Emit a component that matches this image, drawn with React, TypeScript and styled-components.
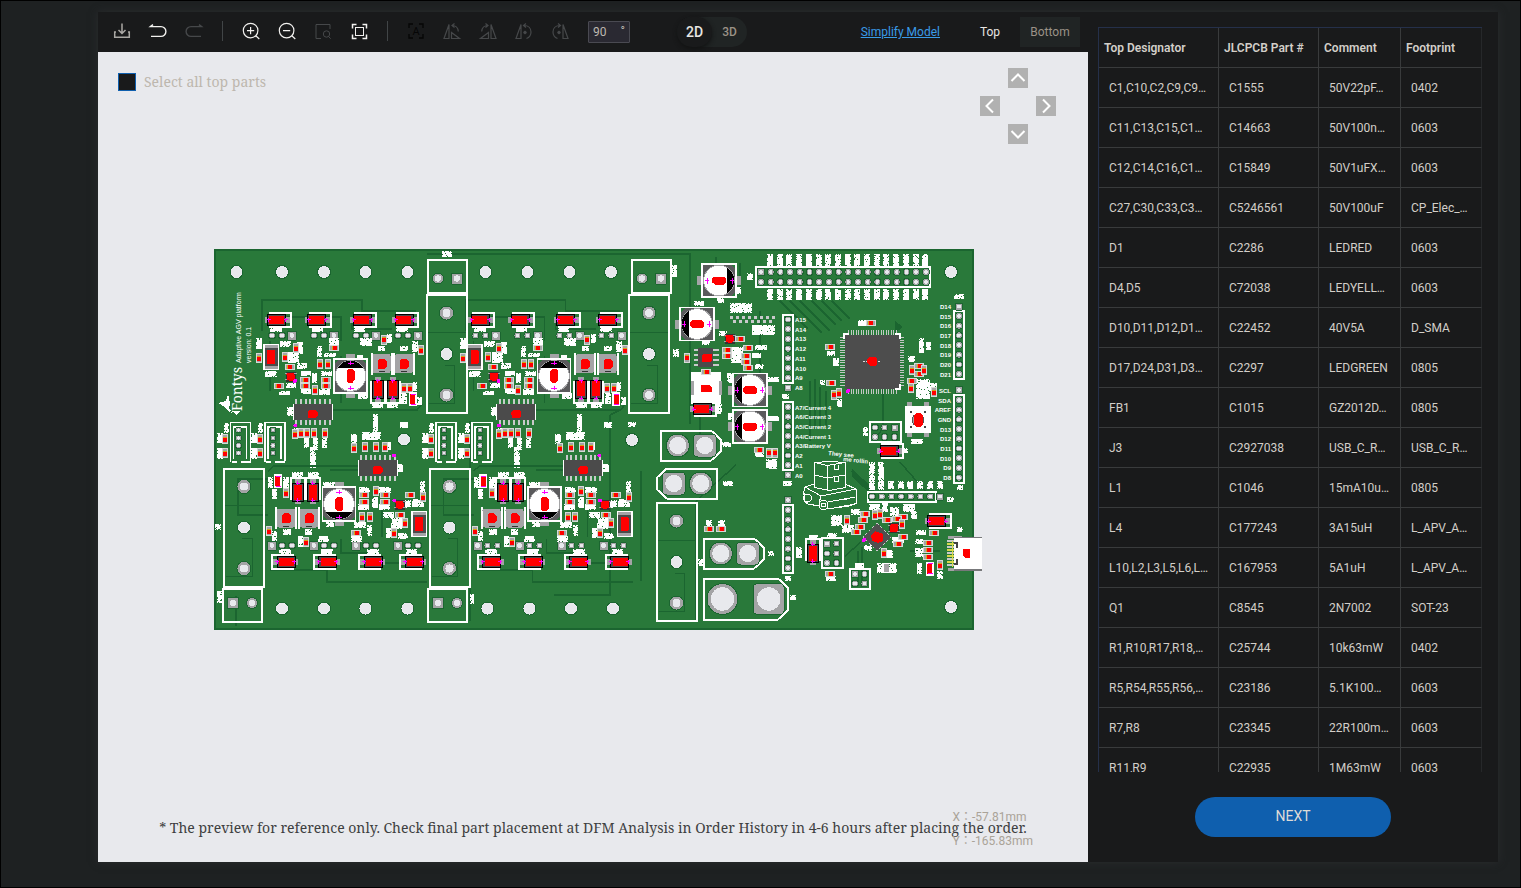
import React from "react";
import styled, { createGlobalStyle } from "styled-components";

const GlobalStyle = createGlobalStyle`
  *, *::before, *::after { box-sizing: border-box; }
  body { margin: 0; background: #1e2122; }
  button, input { font: inherit; }
`;

/* ---------- page frame ---------- */

const Page = styled.div`
  display: flex;
  height: 100vh;
  min-height: 640px;
  padding: 11px 22px 25px 97px;
  border: 1px solid #000;
  background: #1e2122;
  color: #d3cfc9;
  font-family: Roboto, "Liberation Sans", sans-serif;
  font-size: 12px;
`;

const Dialog = styled.div`
  display: flex;
  flex: 1;
  min-width: 0;
  background: #191a1b;
  box-shadow: 0 0 8px #2a2c2e;
`;

const Viewer = styled.main`
  display: flex;
  flex: 1;
  flex-direction: column;
  min-width: 0;
`;

/* ---------- toolbar ---------- */

const Toolbar = styled.div`
  display: flex;
  flex: 0 0 40px;
  align-items: center;
  gap: 16px;
  padding: 0 8px 0 14px;
`;

const IconButton = styled.button<{ $color: string }>`
  display: block;
  flex: none;
  width: 20px;
  height: 20px;
  margin-bottom: 2px;
  padding: 0;
  border: 0;
  background: none;
  color: ${(p) => p.$color};

  svg {
    display: block;
    fill: none;
    stroke: currentColor;
  }
`;

const Divider = styled.span`
  flex: none;
  width: 1px;
  height: 20px;
  margin: 0 2px 2px;
  background: #414547;
`;

const AngleField = styled.label`
  display: flex;
  flex: none;
  width: 42px;
  height: 22px;
  margin-left: 2px;
  border: 1px solid #4a4a52;
  border-radius: 1px;
  background: #2a2932;
  color: #bdb8b0;
  line-height: 18px;
`;

const AngleInput = styled.input`
  flex: 1;
  min-width: 0;
  padding: 0 0 0 4px;
  border: 0;
  background: none;
  color: inherit;
`;

const Degree = styled.span`
  padding-right: 4px;
`;

const ModeSwitch = styled.div`
  display: flex;
  flex: none;
  height: 30px;
  margin-left: 31px;
  border-radius: 15px;
  background: #202424;
`;

const ModeButton = styled.button<{ $active?: boolean }>`
  width: 35px;
  padding: 0;
  border: 0;
  border-radius: 15px;
  background: ${(p) => (p.$active ? "#191a1b" : "none")};
  box-shadow: ${(p) => (p.$active ? "0 2px 4px #121313" : "none")};
  color: ${(p) => (p.$active ? "#e8e6e3" : "#9b9287")};
  font-size: ${(p) => (p.$active ? 14 : 12)}px;
  font-weight: 500;
`;

const SideGroup = styled.div`
  display: flex;
  align-items: center;
  gap: 20px;
  margin-left: auto;
`;

const ModelLink = styled.a`
  color: #3a9be8;
  white-space: nowrap;
`;

const SideTabs = styled.div`
  display: flex;
`;

const SideTab = styled.button<{ $active?: boolean }>`
  width: 60px;
  height: 30px;
  padding: 0;
  border: 0;
  background: ${(p) => (p.$active ? "#191a1b" : "#202424")};
  color: ${(p) => (p.$active ? "#e8e6e3" : "#9b9287")};
`;

/* ---------- canvas ---------- */

const Canvas = styled.section`
  position: relative;
  display: flex;
  flex: 1;
  flex-direction: column;
  min-height: 0;
  background: #e8e9ed;
`;

const CanvasHead = styled.div`
  display: flex;
  justify-content: space-between;
  padding: 16px 32px 0 20px;
`;

const SelectAll = styled.label`
  display: flex;
  align-items: center;
  gap: 8px;
  height: 28px;
  color: #bdb7ae;
  font: 14px/28px "Noto Serif", "Liberation Serif", serif;
`;

const Tick = styled.input`
  appearance: none;
  width: 18px;
  height: 18px;
  margin: 0;
  border: 1px solid #0f5fae;
  background: #191a1b;
`;

const PanPad = styled.div`
  display: grid;
  grid-template-areas: ". up ." "left . right" ". down .";
  grid-template-columns: repeat(3, 20px);
  grid-template-rows: repeat(3, 20px);
  gap: 8px;
`;

const PanButton = styled.button<{ $area: string }>`
  grid-area: ${(p) => p.$area};
  padding: 0;
  border: 0;
  background: #b1b1b1;

  svg {
    display: block;
    fill: none;
    stroke: #fff;
    stroke-width: 2;
  }
`;

const BoardArea = styled.div`
  display: flex;
  flex: 1;
  align-items: center;
  justify-content: center;
  min-height: 0;
  padding-left: 2px;
`;

const BoardSvg = styled.svg`
  display: block;
  width: 760px;
  max-width: 100%;
  overflow: visible;
`;

const Note = styled.p`
  margin: 0;
  padding: 84px 16px 24px;
  color: #3e3f41;
  font: 14px/20px "Noto Serif", "Liberation Serif", serif;
  text-align: center;
`;

const Position = styled.div`
  position: absolute;
  right: 55px;
  bottom: 9px;
  color: #aaa398;
  font-family: Roboto, "Noto Sans CJK JP", sans-serif;
  line-height: 24px;
`;

/* ---------- parts list ---------- */

const Side = styled.aside`
  display: flex;
  flex: 0 0 410px;
  flex-direction: column;
  align-items: center;
  padding: 15px 0 25px;
`;

const TableFrame = styled.div`
  flex: 1;
  align-self: stretch;
  min-height: 0;
  margin: 0 16px 0 10px;
  overflow: hidden;
`;

const PartsTable = styled.table`
  width: 100%;
  table-layout: fixed;
  border: 0 solid #25304a;
  border-width: 1px 0 0 1px;
  border-spacing: 0;
`;

const Cell = styled.td`
  height: 40px;
  padding: 0 0 0 10px;
  overflow: hidden;
  border: 0 solid #393b3c;
  border-width: 0 1px 1px 0;
  white-space: nowrap;

  &:last-child { border-right-color: #26282a; }
`;

const HeadCell = styled(Cell)`
  padding-left: 5px;
  font-weight: 600;
  text-align: left;
`;

const Col = styled.col<{ $width: number }>`
  width: ${(p) => p.$width}px;
`;

const NextButton = styled.button`
  flex: none;
  width: 196px;
  height: 40px;
  margin-top: 25px;
  padding: 0 0 2px;
  border: 0;
  border-radius: 20px;
  background: #0f5fae;
  color: #dedbd7;
  font-size: 14px;
`;

/* ---------- toolbar icons ---------- */

const Glyph = ({ children, flip }: { children: React.ReactNode; flip?: boolean }) => (
  <svg width="20" height="20" viewBox="0 0 20 20" aria-hidden="true">
    {flip ? <g transform="translate(20 0) scale(-1 1)">{children}</g> : children}
  </svg>
);

const ReturnArrow = () => <path d="M5 3.6L2.4 5.6H13a4.9 4.9 0 0 1 0 9.8H3" strokeWidth="1.4" />;
const Lens = () => (
  <>
    <circle cx="9.6" cy="9.6" r="7.3" strokeWidth="1.2" />
    <path d="M14.8 14.8L18.3 18M6 9.6h7.2" strokeWidth="1.2" />
  </>
);
const FlipShape = () => (
  <path d="M2 17.5L7 3.5v14zM9.5 11.5v6h8zM10 4.5c4 0 6 2 6.3 6M12.5 2.5L10 4.5l2.5 2" strokeWidth="1.2" />
);
const TurnShape = () => (
  <>
    <path d="M2 17.5L7 3.5v14zM10 4.5c4.5 0 7 3 7 6.5s-2 5.5-4.5 6.5M12 2.5L9.5 4.5l2.5 2" strokeWidth="1.2" />
    <circle cx="11" cy="11.5" r="1.3" fill="currentColor" />
  </>
);

const CORNERS = "M3 7V3h4M13 3h4v4M17 13v4h-4M7 17H3v-4";

/* ---------- circuit board drawing ---------- */

type Pt = [number, number];
type Rect4 = [number, number, number, number];

const GREEN = "#29793a";
const TRACE = "#1b6530";
const PAD = "#a4a4a6";
const HOLE = "#e8e9ed";

/* Dense silkscreen lettering, drawn as runs of one-unit dots. */
const inkPath = (areas: Rect4[]) => {
  let seed = 7;
  const rnd = () => {
    seed = (seed * 1103515245 + 12345) % 2147483648;
    return seed / 2147483648;
  };
  let d = "";
  areas.forEach(([x, y, w, h]) => {
    for (let j = 0; j < h; j++) {
      let start = -1;
      for (let i = 0; i <= w; i++) {
        const edge = i === 0 || j === 0 || i === w - 1 || j === h - 1;
        const on = i < w && rnd() < (edge ? 0.78 : 0.95);
        if (on && start < 0) start = i;
        if (!on && start >= 0) {
          d += `M${x + start} ${y + j}h${i - start}v1h${start - i}z`;
          start = -1;
        }
      }
    }
  });
  return d;
};

const Ink = ({ areas }: { areas: Rect4[] }) => <path d={inkPath(areas)} fill="#fff" />;

const Outline = ({ r, d }: { r?: Rect4; d?: string }) =>
  r ? (
    <rect x={r[0]} y={r[1]} width={r[2]} height={r[3]} fill="none" stroke="#fff" strokeWidth="2" />
  ) : (
    <path d={d} fill="none" stroke="#fff" strokeWidth="2" />
  );

const Drill = ({ x, y, r = 6.5 }: { x: number; y: number; r?: number }) => (
  <circle cx={x} cy={y} r={r} fill={HOLE} stroke={TRACE} />
);

const Pin = ({ x, y, s = 3, sq, big }: { x: number; y: number; s?: number; sq?: boolean; big?: boolean }) => (
  <>
    <rect
      x={x - s - 1} y={y - s - 1} width={s * 2 + 2} height={s * 2 + 2}
      rx={sq ? (big ? 5 : 1) : s + 1} fill={TRACE}
    />
    <rect x={x - s} y={y - s} width={s * 2} height={s * 2} rx={sq ? (big ? 4 : 0) : s} fill={PAD} />
    <circle cx={x} cy={y} r={s * (big ? 0.78 : 0.62)} fill={HOLE} />
  </>
);

const Chip = ({ at: [x, y], v }: { at: Pt; v?: boolean }) => (
  <g transform={`translate(${x} ${y})${v ? " rotate(90)" : ""}`}>
    <rect x="-5" y="-3" width="10" height="6" fill="#d6dad6" />
    <rect x="-4" y="-2" width="8" height="4" fill={PAD} />
    <rect x="-2.5" y="-2" width="5" height="4" fill="#d9a514" />
    <rect x="-1.5" y="-2" width="4" height="4" fill="#f00" />
  </g>
);

const Chips = ({ h = [], v = [] }: { h?: Pt[]; v?: Pt[] }) => (
  <>
    {h.map((p, i) => <Chip key={i} at={p} />)}
    {v.map((p, i) => <Chip key={`v${i}`} at={p} v />)}
  </>
);

const Cross = ({ x, y }: { x: number; y: number }) => (
  <path d={`M${x - 3} ${y}h6M${x} ${y - 2}v4`} stroke="#f0f" />
);

const Diode = ({ x, y, turn = 0 }: { x: number; y: number; turn?: number }) => (
  <g transform={`translate(${x} ${y}) rotate(${turn})`}>
    <path d="M-8 -7H14V7H-8" fill="none" stroke="#fff" strokeWidth="2" />
    <rect x="-12" y="-3" width="25" height="6" fill={PAD} />
    <rect x="-9" y="-5.5" width="18" height="11" fill="#4b4b4b" stroke="#000" />
    <rect x="-8" y="-4" width="15" height="8" fill="#f00" />
    <path d="M-10 0h4M7 0h4M-8.5 -2v4M9 -2v4" stroke="#f0f" />
  </g>
);

const Can = ({ x, y, turn = 0 }: { x: number; y: number; turn?: number }) => (
  <g transform={`translate(${x} ${y}) rotate(${turn})`}>
    <rect x="-4.5" y="-22" width="9" height="44" fill={PAD} />
    <path d="M-16 -12L-11 -17H11L16 -12V16H-16z" fill="#5a5a5c" />
    <rect x="-16.5" y="-17" width="33" height="34" fill="none" stroke="#fff" strokeWidth="1.5" />
    <circle r="15.3" fill="#fff" stroke={PAD} />
    <path d="M-13 -8A15.3 15.3 0 0 1 13 -8z" fill="#000" />
    <path d="M-4 -5l2 -2h4l2 2v9l-2 3h-4l-2 -2z" fill="#f00" />
    <Cross x={0} y={-13} />
    <Cross x={0} y={12} />
  </g>
);

const Coil = ({ x, y }: { x: number; y: number }) => (
  <>
    <path d={`M${x - 10} ${y - 11}v22M${x + 10} ${y - 11}v22`} stroke="#fff" strokeWidth="2" />
    <rect x={x - 9} y={y - 9.5} width="18" height="19" rx="2" fill={PAD} />
    <path d={`M${x - 4} ${y - 3}l2 -2h4l3 3v5l-2 2h-7z`} fill="#f00" />
    <path d={`M${x - 3} ${y + 8}h6`} stroke="#333" />
  </>
);

const Soic = ({ x, y }: { x: number; y: number }) => (
  <>
    {Array.from({ length: 8 }, (_, i) => (
      <rect key={i} x={x - 17.5 + i * 4.8} y={y - 13} width="2" height="26" fill="#c9c9cb" />
    ))}
    <rect x={x - 20} y={y - 8} width="40" height="16" fill="#fff" />
    <rect x={x - 19} y={y - 8} width="38" height="16" fill="#4b4b4b" />
    <path d={`M${x - 5} ${y}l2 -2h6l2 2v4l-2 2h-7z`} fill="#f00" />
  </>
);

const Slab = ({ x, y }: { x: number; y: number }) => (
  <>
    <rect x={x - 8} y={y - 13} width="16" height="26" fill="#fff" />
    <rect x={x - 6.5} y={y - 12} width="13" height="24" fill={PAD} />
    <rect x={x - 6.5} y={y - 9} width="13" height="18" fill="#4b4b4b" />
    <rect x={x - 4} y={y - 7} width="8" height="14" rx="1" fill="#f00" />
  </>
);

const Dot3 = ({ x, y }: { x: number; y: number }) => (
  <>
    <rect x={x - 5} y={y - 5} width="10" height="10" fill="#333" />
    <path d={`M${x - 6} ${y - 3}h12M${x - 6} ${y + 3}h12`} stroke={PAD} />
    <rect x={x - 4} y={y - 4} width="8" height="8" rx="2" fill="#f00" />
  </>
);

const Led = ({ x, y }: { x: number; y: number }) => (
  <>
    <rect x={x - 4} y={y - 7} width="8" height="14" fill="#fff" />
    <rect x={x - 2.5} y={y - 5} width="5" height="10" fill="#f00" />
    <path d={`M${x - 2} ${y - 5}h5M${x - 2} ${y + 5}h5`} stroke="#f0f" />
  </>
);

const Magenta = ({ x, y }: { x: number; y: number }) => <circle cx={x} cy={y} r="2" fill="#f0f" />;

const UpperDriver = () => (
  <g>
    <path
      d="M262 330V299h100v11h54M287 316h54v24M352 316v12h40M341 402V355M331 409h86l5 -6M270 340v50"
      fill="none" stroke={TRACE} strokeWidth="1.5"
    />
    {[276.5, 316.5, 362, 404].map((x) => <Diode key={x} x={x} y={318.5} />)}
    {[272, 314, 356, 398].map((x) => (
      <g key={x}>
        <Pin x={x} y={334.5} /><Pin x={x + 10} y={334.5} /><Pin x={x + 20} y={334.5} s={4} sq />
      </g>
    ))}
    <Ink
      areas={[
        [256, 337, 6, 11], [280, 340, 11, 6], [297, 341, 6, 12], [288, 351, 11, 11], [297, 362, 10, 6],
        [265, 370, 12, 6], [286, 382, 10, 5], [279, 390, 11, 4], [301, 370, 10, 5], [301, 388, 10, 5],
        [312, 372, 5, 10], [321, 370, 11, 5], [319, 388, 11, 6], [317, 345, 5, 11], [324, 352, 12, 4],
        [329, 337, 10, 8], [360, 337, 12, 8], [387, 333, 5, 9], [378, 345, 7, 5], [400, 345, 8, 5],
        [412, 340, 6, 11], [358, 392, 10, 6], [372, 401, 11, 6], [387, 401, 11, 6], [401, 392, 6, 11],
        [412, 381, 5, 9], [417, 396, 5, 8], [357, 354, 6, 6], [270, 326, 12, 5], [312, 326, 11, 5],
        [354, 326, 11, 5], [396, 326, 12, 5], [287, 406, 6, 9], [294, 427, 6, 8], [304, 437, 5, 10],
        [313, 437, 5, 12], [322, 435, 5, 12], [310, 445, 6, 22], [351, 433, 6, 10], [373, 413, 5, 18],
        [362, 431, 19, 8], [400, 421, 8, 6], [384, 441, 7, 8],
      ]}
    />
    <Slab x={271} y={356} />
    <Dot3 x={290.5} y={375.5} />
    <Magenta x={295} y={380} />
    <Chips
      h={[[289.5, 365.5], [278.5, 385], [305, 378.5], [305, 385], [325.5, 378.5], [325.5, 385], [334, 347]]}
      v={[
        [259, 357], [295.5, 347], [284.5, 356], [314.5, 389], [320, 363], [327.5, 363], [383.5, 338.5],
        [421, 349], [403.5, 387], [410, 387], [301, 432], [307, 432], [314, 432], [325, 432], [295, 433],
      ]}
    />
    <Can x={350.5} y={375} />
    <Coil x={381.5} y={362.5} />
    <Coil x={404} y={362.5} />
    <Diode x={377.5} y={388} turn={90} />
    <Diode x={392.5} y={388} turn={90} />
    <Led x={412.5} y={398} />
    <Soic x={312.5} y={411} />
    <Magenta x={295.5} y={424.5} />
  </g>
);

const LowerDriver = () => (
  <g>
    <path
      d="M268 478h-30v36h30M268 470l6 -5h84M270 569h57v12h100M376 545v17h50M341 538v14h30M382 500v36M330 469H390"
      fill="none" stroke={TRACE} strokeWidth="1.5"
    />
    {[286, 327.5, 373, 414].map((x) => <Diode key={x} x={x} y={560.5} turn={180} />)}
    {[272, 314, 356, 398].map((x) => (
      <g key={x}>
        <Pin x={x} y={544.5} s={4} sq /><Pin x={x + 10} y={544.5} /><Pin x={x + 20} y={544.5} />
      </g>
    ))}
    <Ink
      areas={[
        [268, 476, 5, 11], [272, 488, 5, 10], [283, 476, 6, 11], [292, 471, 11, 6], [308, 471, 11, 6],
        [323, 481, 12, 6], [359, 486, 11, 6], [358, 503, 11, 6], [372, 496, 6, 11], [379, 486, 12, 6],
        [379, 503, 11, 6], [403, 499, 8, 8], [412, 498, 12, 8], [420, 480, 5, 12], [383, 511, 11, 6],
        [391, 517, 11, 11], [354, 521, 12, 6], [367, 524, 5, 11], [386, 527, 6, 10], [398, 532, 10, 6],
        [318, 535, 11, 6], [351, 535, 11, 6], [272, 530, 5, 10], [283, 528, 8, 6], [305, 528, 7, 6],
        [298, 535, 5, 11], [279, 548, 12, 5], [321, 548, 12, 5], [367, 548, 12, 5], [406, 548, 11, 5],
        [326, 521, 8, 5], [397, 463, 6, 8],
      ]}
    />
    <Led x={277.5} y={480} />
    <Can x={339} y={503} turn={180} />
    <Coil x={286} y={517} />
    <Coil x={309} y={517} />
    <Diode x={297.5} y={491} turn={270} />
    <Diode x={312.5} y={491} turn={270} />
    <Chips
      h={[[364, 494], [364, 500.5], [385, 494], [385, 500.5], [356, 532], [410, 494], [400, 514]]}
      v={[
        [286, 492], [375.5, 490], [362, 516], [369.5, 516], [306, 541], [269, 530], [405, 522], [394, 532],
        [423, 496], [354, 447], [365, 446], [376, 446], [385, 446],
      ]}
    />
    <Dot3 x={399.5} y={503.5} />
    <Magenta x={394.5} y={499.5} />
    <Slab x={419} y={523} />
    <Soic x={377.5} y={467} />
    <Magenta x={394} y={454.5} />
  </g>
);

const TallPort = ({ x, y }: { x: number; y: number }) => (
  <>
    <path d={`M${x} ${y + 37}h39M${x + 18} ${y + 70}h10v38h-26`} fill="none" stroke={TRACE} />
    <Outline r={[x, y, 40, 118]} />
    <Pin x={x + 20} y={y + 18} s={6.5} />
    <Drill x={x + 20} y={y + 59} />
    <Pin x={x + 20} y={y + 100} s={6.5} />
  </>
);

const TwinPort = ({ x, y, first }: { x: number; y: number; first?: boolean }) => (
  <>
    <Outline r={[x, y, 39, 33]} />
    <Pin x={x + 10} y={first ? y + 14 : y + 19} s={5} sq={first} />
    <Pin x={x + 29} y={first ? y + 14 : y + 19} s={5} sq={!first} />
  </>
);

const SmallPlug = ({ x }: { x: number }) => (
  <>
    <path
      d={`M${x - 8} 461V421.500h20v38.500M${x - 7} 461h5M${x + 2} 461h10M${x - 5} 458v-32h13v32`}
      fill="none" stroke="#fff" strokeWidth="1.5"
    />
    {[429, 437, 444.5, 452].map((y) => <Pin key={y} x={x} y={y} s={2.5} />)}
    <Ink areas={[[x - 22, 432, 6, 10], [x - 22, 447, 6, 11], [x - 15, 422, 5, 10]]} />
    <Chips v={[[x - 13.5, 438], [x - 13.5, 452]]} />
  </>
);

const PowerPort = ({ x, y, w, h, s, left }: { x: number; y: number; w: number; h: number; s: number; left?: boolean }) => {
  const body = left
    ? `M${x + 10} ${y}H${x + w}V${y + h}H${x + 10}L${x} ${y + h - 9}V${y + 9}z`
    : `M${x} ${y}H${x + w - 10}L${x + w} ${y + 9}V${y + h - 9}L${x + w - 10} ${y + h}H${x}z`;
  const a = left ? x + w * 0.28 : x + w * (s > 12 ? 0.22 : 0.28);
  const b = left ? x + w * 0.73 : x + w * (s > 12 ? 0.77 : 0.73);
  return (
    <>
      <Outline d={body} />
      <Pin x={a} y={y + h / 2} s={s} big sq={left} />
      <Pin x={b} y={y + h / 2} s={s} big sq={!left} />
    </>
  );
};

const STEP = 9.7;
const pins = (n: number, from: number) => Array.from({ length: n }, (_, i) => from + i * STEP);

const PinColumn = ({ x, from, n, key1, labels, side }: {
  x: number; from: number; n: number; key1: number; labels?: string[]; side?: "left" | "right";
}) => {
  const all = [...pins(n, from), key1].sort((a, b) => a - b);
  return (
    <>
      <Outline r={[x - 5, from - 5, 10, (n - 1) * STEP + 10]} />
      {pins(n, from).map((y) => <Pin key={y} x={x} y={y} s={3} />)}
      <Pin x={x} y={key1} s={3} sq />
      {labels?.map((t, i) => (
        <text
          key={t} x={side === "left" ? x - 8 : x + 7} y={all[i] + 2.5}
          textAnchor={side === "left" ? "end" : "start"}
        >
          {t}
        </text>
      ))}
    </>
  );
};

const Mcu = () => (
  <>
    <path d="M848 331.500h49M848 390h49" stroke="#c3c6c4" strokeWidth="5" strokeDasharray="1.3 1.2" />
    <path d="M842.500 336v49M901 336v49" stroke="#c3c6c4" strokeWidth="5" strokeDasharray="1.3 1.2" />
    <rect x="844.5" y="333.5" width="55" height="54" fill="#4d4d4d" />
    <path d="M844 338v-5h5M895 333h5v5M900 383v5h-5" fill="none" stroke="#fff" strokeWidth="1.5" />
    <path d="M863 360.500h17" stroke="#ddd" strokeDasharray="2 1" />
    <path d="M867 358l2 -2h6l2 2v5l-2 2h-5l-3 -3z" fill="#f00" />
    <Magenta x={848} y={390} />
  </>
);

const Cart = () => (
  <>
    <path
      d="M814.500 461.500l15 -1 16 1v25l-16 3 -15 -3zM814.500 461.500l13 3v25M827.500 464.500l18 -3M814.500 474l13 3 18 -3M834.500 464v4h4v-4M834.500 476v4h4v-4"
      fill="none" stroke="#fff"
    />
    <path
      d="M814 483l-9 3 -2 8M845 483l11 5 1 14 -8 3 -22 3M805 486l16 9 35 -7M821 495l-2 7M828 501l27 -5M829 508l26 -5M839 499l8 -1M804 492v8l4 3 11 2"
      fill="none" stroke="#fff"
    />
    <circle cx="807.5" cy="497" r="4" fill="none" stroke="#fff" />
    <circle cx="823.5" cy="504" r="4.5" fill={GREEN} stroke="#fff" />
    <circle cx="823.5" cy="504" r="2" fill="none" stroke="#fff" />
  </>
);

const Receptacle = () => (
  <>
    {Array.from({ length: 9 }, (_, i) => (
      <path key={i} d={`M947 ${540 + i * 3}h7`} stroke={i % 2 ? "#d6d84a" : "#c9c9cb"} strokeWidth="1.5" />
    ))}
    <rect x="948" y="535" width="14" height="3" fill={PAD} />
    <rect x="948" y="567" width="14" height="3" fill={PAD} />
    <rect x="954" y="536" width="28" height="33" fill="#fff" />
    <path d="M954 536.500h28M954 569h28" stroke="#77787a" strokeWidth="1.5" />
    <path d="M952.500 540v26" stroke="#d6d84a" strokeWidth="1.5" />
    <path d="M954 542h3v5M954 563h3v-5" fill="none" stroke="#444" strokeWidth="1.5" />
    <path d="M963 548h7v9h-5l-2 -3z" fill="#f00" />
  </>
);

const HOLES: Pt[] = [
  [236.5, 271], [282, 271], [324, 271], [365.5, 271], [407.5, 271], [485.5, 271], [527.5, 271],
  [569.5, 271], [611, 271], [951, 271], [282, 607.5], [324, 607.5], [365.5, 607.5], [407.5, 607.5],
  [487.5, 607.5], [529.5, 607.5], [571, 607.5], [613, 607.5], [951, 606], [404, 438.5], [632, 439],
];

const COLUMN_INK: Rect4[] = pins(17, 770).flatMap((x): Rect4[] => [
  [Math.round(x) - 3, 253, 6, 12], [Math.round(x) - 3, 288, 6, 11],
]);

const Board = () => (
  <BoardSvg viewBox="214 248 760 381" shapeRendering="crispEdges" role="img" aria-label="Top side of the circuit board">
    <rect x="215" y="249" width="758" height="379" fill={GREEN} stroke={TRACE} strokeWidth="2" />
    <g fill="none" stroke={TRACE} strokeWidth="1.5">
      <path d="M427 253h263v170M470 420v200M610 414v180h-56M641 470v110M236 595v30M696 500v120M610 414l12 -6" />
      <path d="M780 300l28 28M790 300l32 32M800 300l30 30M812 300l24 24M822 300l20 20M832 300l18 18" />
      <path d="M883 387v40l-10 14M810 380v60M815 378v50M820 386v40M826 390v36M900 461l26 30M852 470l20 20M910 550h30M696 500l40 -36" />
      <path d="M858 580v-30M862 580v-34M845 555l16 -14M716 256v40M740 262v30M760 310v90M700 410v40" />
    </g>
    <path d="M895 320l8 6 -8 6zM852 468l22 20v8l-22 -20z" fill={TRACE} />

    {HOLES.map(([x, y]) => <Drill key={`${x}-${y}`} x={x} y={y} />)}

    <UpperDriver />
    <g transform="translate(203.5 0)"><UpperDriver /></g>
    <LowerDriver />
    <g transform="translate(205.5 0)"><LowerDriver /></g>

    <TallPort x={426.5} y={294} />
    <TallPort x={629} y={294} />
    <TallPort x={224} y={467.5} />
    <TallPort x={429.5} y={467.5} />
    <TallPort x={656.5} y={502} />
    <TwinPort x={428} y={258.5} />
    <TwinPort x={632} y={258.5} />
    <TwinPort x={223} y={588} first />
    <TwinPort x={428} y={588} first />
    {[238.5, 273, 444, 480].map((x) => <SmallPlug key={x} x={x} />)}

    <PowerPort x={661} y={429.5} w={60} h={30} s={11} />
    <PowerPort x={657} y={467.5} w={60} h={30} s={11} left />
    <PowerPort x={704} y={537.5} w={60} h={30} s={11} />
    <PowerPort x={704} y={577.5} w={84} h={41} s={15} />

    <Ink
      areas={[
        ...COLUMN_INK,
        [442, 250, 10, 6], [672, 264, 5, 12], [694, 300, 10, 5], [717, 297, 7, 5], [747, 272, 6, 7], [737, 286, 4, 7],
        [730, 302, 22, 10], [752, 324, 23, 10], [719, 330, 8, 5], [673, 348, 6, 8], [731, 346, 12, 16],
        [755, 344, 12, 5], [752, 352, 9, 5], [755, 363, 9, 5], [716, 403, 6, 10], [727, 372, 7, 10],
        [768, 376, 11, 5], [768, 415, 11, 5], [728, 412, 5, 7], [702, 340, 8, 4], [766, 458, 11, 10],
        [755, 452, 9, 4], [858, 319, 8, 6], [827, 350, 8, 5], [833, 357, 6, 8], [820, 379, 5, 5],
        [837, 398, 5, 8], [919, 337, 5, 15], [926, 341, 5, 8], [908, 355, 7, 6], [916, 378, 14, 20],
        [929, 382, 8, 8], [911, 438, 12, 5], [863, 426, 5, 9], [903, 447, 5, 6], [869, 461, 6, 28],
        [878, 461, 6, 28], [888, 480, 6, 8], [898, 480, 6, 8], [907, 480, 6, 8], [917, 480, 6, 8],
        [927, 480, 6, 8], [937, 480, 6, 8], [722, 441, 9, 5], [723, 480, 10, 5], [698, 558, 5, 7],
        [768, 550, 6, 5], [790, 594, 6, 5], [706, 519, 6, 6], [718, 519, 7, 6], [831, 514, 11, 11],
        [851, 508, 9, 6], [842, 524, 12, 8], [869, 503, 11, 6], [882, 501, 6, 10], [890, 506, 9, 9],
        [903, 503, 12, 8], [911, 510, 6, 8], [892, 536, 12, 6], [886, 549, 7, 8], [864, 544, 8, 6],
        [877, 562, 20, 10], [934, 512, 8, 3], [916, 529, 10, 5], [915, 538, 8, 5], [915, 547, 8, 9],
        [917, 562, 5, 11], [937, 570, 6, 8], [957, 526, 6, 5], [809, 534, 9, 5], [827, 532, 10, 5],
        [796, 546, 6, 11], [826, 575, 10, 5], [855, 562, 9, 5], [783, 480, 9, 5], [785, 575, 6, 5],
        [957, 484, 6, 5], [947, 496, 7, 5], [954, 293, 10, 5], [215, 523, 6, 6],
        [217, 590, 5, 12], [470, 593, 4, 10], [628, 421, 8, 5], [782, 393, 7, 5], [400, 421, 8, 5],
      ]}
    />

    <Can x={719} y={279.5} turn={90} />
    <Can x={697} y={323} turn={270} />
    <Can x={750} y={389} turn={270} />
    <Can x={750} y={425.5} turn={270} />

    <path d="M730 316h45M733 320h42" stroke="#c9c9cb" strokeWidth="3" strokeDasharray="3 3" />
    <Dot3 x={729.5} y={337.5} />
    <path d="M694 349h25M694 354h25M694 359h25M694 364h25" stroke="#c9c9cb" strokeWidth="2" />
    <rect x="698" y="347" width="15" height="19" fill="#4b4b4b" />
    <rect x="702" y="353" width="10" height="8" rx="2" fill="#f00" />
    <rect x="691" y="371" width="30" height="32" fill="#fff" />
    <path d="M692 380v14M720.500 380v14" stroke={PAD} strokeWidth="3" />
    <path d="M701 384h8l3 3v4h-11z" fill="#f00" />
    <Diode x={702} y={408} />
    <Chips
      h={[
        [706, 370.5], [727, 349], [727, 355], [746, 355], [746, 361], [748, 366.5], [748, 347], [740, 338],
        [759, 449], [870.5, 322], [830, 345.5], [831, 382], [911.5, 380], [919, 365], [919, 373], [709, 528],
        [721, 528], [865, 512.5], [863, 519], [860, 525.5], [856, 531], [887, 519], [903, 516], [897, 518],
        [903, 535.5], [898, 543], [928, 541.5], [928, 549], [928, 555.5], [934, 532], [830, 573],
      ]}
      v={[
        [687, 356.5], [768.5, 451.5], [774.5, 451.5], [839, 392], [833.5, 393.5], [924, 369],
        [911.5, 369], [910.5, 387], [934, 391], [847, 519], [875, 514], [880, 513], [940, 564], [902, 523],
        [884, 552],
      ]}
    />

    <Outline r={[756, 266, 174, 20]} />
    {pins(18, 761).map((x, i) => (
      <g key={x}><Pin x={x} y={271} s={3} sq={i === 0} /><Pin x={x} y={281} s={3} /></g>
    ))}
    <g fill="#fff" fontFamily='"Liberation Sans", sans-serif' fontSize="6" fontWeight="700">
      <PinColumn x={788} from={318.5} n={7} key1={386.5} side="right"
        labels={["A15", "A14", "A13", "A12", "A11", "A10", "A9", "A8"]} />
      <PinColumn x={788} from={406} n={7} key1={474} side="right"
        labels={["A7/Current 4", "A6/Current 3", "A5/Current 2", "A4/Current 1", "A3/Battery V", "A2", "A1", "A0"]} />
      <PinColumn x={788} from={509} n={7} key1={499} />
      <PinColumn x={959} from={315} n={7} key1={305.5} side="left"
        labels={["D14", "D15", "D16", "D17", "D18", "D19", "D20", "D21"]} />
      <PinColumn x={959} from={399} n={9} key1={389} side="left"
        labels={["SCL", "SDA", "AREF", "GND", "D13", "D12", "D11", "D10", "D9", "D8"]} />
      <text x="828" y="454" transform="rotate(6 828 454)">They see</text>
      <text x="843" y="460" transform="rotate(6 843 460)">me rollin</text>
      <text transform="translate(241 362) rotate(-90)" fontSize="7" fontWeight="400">Adaptive AGV platform</text>
      <text transform="translate(251 362) rotate(-90)" fontSize="7" fontWeight="400">version: 0.1</text>
      <text transform="translate(242 410) rotate(-90)" fontSize="14" fontWeight="400" fontFamily='"Noto Serif", serif'>Fontys</text>
    </g>
    <path d="M218 402l8 -2 2 -7 2 9 -1 6 8 6 -9 -4 -3 -4zM229 410l8 4 3 -4" fill="#fff" />

    <Outline r={[867.5, 490.5, 68, 10]} />
    {pins(7, 872).map((x) => <Pin key={x} x={x} y={495.5} s={3} />)}
    <Pin x={940} y={495.5} s={3} sq />

    <Mcu />
    <rect x="905" y="405" width="26" height="27" fill="#fff" />
    {[[909, 403], [926, 403], [909, 434], [926, 434]].map(([x, y]) => (
      <rect key={`${x}${y}`} x={x - 2.5} y={y - 2} width="5" height="4" fill={PAD} />
    ))}
    <circle cx="918" cy="419" r="6" fill={PAD} stroke="#555" />
    <path d="M914 415l2 -3h4l3 3v8l-3 3h-4l-2 -3z" fill="#f00" />
    <path d="M910 411h2M924 411h2M910 426h2M924 426h2" stroke="#444" strokeWidth="2" />

    <Outline r={[869.5, 421, 31, 20]} />
    {[875, 884.5, 894.5].map((x) => (
      <g key={x}><Pin x={x} y={426.5} s={3} sq={x > 890} /><Pin x={x} y={436} s={3} /></g>
    ))}
    <Diode x={889} y={450} />
    <Cart />

    <path d="M877 522l14 14 -14 14 -14 -14z" fill="#505050" stroke="#c9c9cb" strokeDasharray="1 1" />
    <path d="M871 534l4 -4 8 3v7l-5 2 -6 -2z" fill="#f00" />
    <Magenta x={864} y={539} />
    <Dot3 x={894} y={527} />
    <Diode x={936.5} y={520} />
    <Diode x={812.5} y={552} turn={270} />
    <Outline r={[821.5, 537, 21, 30]} />
    {[542.5, 552.5, 562].map((y) => (
      <g key={y}><Pin x={827} y={y} s={3} sq={y < 550} /><Pin x={836.5} y={y} s={3} /></g>
    ))}
    <Outline r={[850, 568, 20, 20]} />
    {[573, 582.5].map((y) => (
      <g key={y}><Pin x={855} y={y} s={3} sq={y < 580} /><Pin x={864.5} y={y} s={3} /></g>
    ))}
    <rect x="884" y="563" width="5" height="8" fill={PAD} />
    <Led x={929.5} y={567.5} />
    <Receptacle />
  </BoardSvg>
);

/* ---------- data ---------- */

const PARTS = [
  ["C1,C10,C2,C9,C9…", "C1555", "50V22pF…", "0402"],
  ["C11,C13,C15,C1…", "C14663", "50V100n…", "0603"],
  ["C12,C14,C16,C1…", "C15849", "50V1uFX…", "0603"],
  ["C27,C30,C33,C3…", "C5246561", "50V100uF", "CP_Elec_…"],
  ["D1", "C2286", "LEDRED", "0603"],
  ["D4,D5", "C72038", "LEDYELL…", "0603"],
  ["D10,D11,D12,D1…", "C22452", "40V5A", "D_SMA"],
  ["D17,D24,D31,D3…", "C2297", "LEDGREEN", "0805"],
  ["FB1", "C1015", "GZ2012D…", "0805"],
  ["J3", "C2927038", "USB_C_R…", "USB_C_R…"],
  ["L1", "C1046", "15mA10u…", "0805"],
  ["L4", "C177243", "3A15uH", "L_APV_A…"],
  ["L10,L2,L3,L5,L6,L…", "C167953", "5A1uH", "L_APV_A…"],
  ["Q1", "C8545", "2N7002", "SOT-23"],
  ["R1,R10,R17,R18,…", "C25744", "10k63mW", "0402"],
  ["R5,R54,R55,R56,…", "C23186", "5.1K100…", "0603"],
  ["R7,R8", "C23345", "22R100m…", "0603"],
  ["R11,R9", "C22935", "1M63mW", "0603"],
];

const PAN = [
  { area: "up", d: "M3.5 13L10 6.5L16.5 13" },
  { area: "left", d: "M13 3.5L6.5 10L13 16.5" },
  { area: "right", d: "M7 3.5L13.5 10L7 16.5" },
  { area: "down", d: "M3.5 7L10 13.5L16.5 7" },
];

const BRIGHT = "#f2f1ef";
const DIM = "#46484a";

export default function App() {
  return (
    <>
      <GlobalStyle />
      <Page>
        <Dialog>
          <Viewer>
            <Toolbar>
              <IconButton $color="#aaa8a4" aria-label="Download">
                <Glyph><path d="M10 2.5v10M6.5 9l3.500 3.500L13.500 9M4 11H2.700v5.300h14.600V11H16" strokeWidth="1.5" /></Glyph>
              </IconButton>
              <IconButton $color={BRIGHT} aria-label="Undo"><Glyph><ReturnArrow /></Glyph></IconButton>
              <IconButton $color={DIM} aria-label="Redo"><Glyph flip><ReturnArrow /></Glyph></IconButton>
              <Divider />
              <IconButton $color={BRIGHT} aria-label="Zoom in">
                <Glyph><Lens /><path d="M9.600 6v7.200" strokeWidth="1.2" /></Glyph>
              </IconButton>
              <IconButton $color={BRIGHT} aria-label="Zoom out"><Glyph><Lens /></Glyph></IconButton>
              <IconButton $color={DIM} aria-label="Zoom to area">
                <Glyph><path d="M8 17.500H3v-14h14V8M15.500 15.500l2.200 2.200" /><circle cx="13.5" cy="13" r="3.2" /></Glyph>
              </IconButton>
              <IconButton $color={BRIGHT} aria-label="Fit to view">
                <Glyph>
                  <path d={CORNERS} strokeWidth="1.5" transform="translate(.5 .5)" />
                  <rect x="6.5" y="6.5" width="8" height="8" />
                </Glyph>
              </IconButton>
              <Divider />
              <IconButton $color="#060606" aria-label="Show designators">
                <Glyph>
                  <path d={CORNERS} strokeWidth="1.3" />
                  <text x="10" y="14" textAnchor="middle" fontSize="11" fill="currentColor" stroke="none">A</text>
                </Glyph>
              </IconButton>
              <IconButton $color={DIM} aria-label="Rotate left"><Glyph><FlipShape /></Glyph></IconButton>
              <IconButton $color={DIM} aria-label="Rotate right"><Glyph flip><FlipShape /></Glyph></IconButton>
              <IconButton $color={DIM} aria-label="Turn left by angle"><Glyph><TurnShape /></Glyph></IconButton>
              <IconButton $color={DIM} aria-label="Turn right by angle"><Glyph flip><TurnShape /></Glyph></IconButton>
              <AngleField>
                <AngleInput defaultValue="90" aria-label="Rotation angle" />
                <Degree>°</Degree>
              </AngleField>
              <ModeSwitch>
                <ModeButton $active>2D</ModeButton>
                <ModeButton>3D</ModeButton>
              </ModeSwitch>
              <SideGroup>
                <ModelLink href="#simplify">Simplify Model</ModelLink>
                <SideTabs>
                  <SideTab $active>Top</SideTab>
                  <SideTab>Bottom</SideTab>
                </SideTabs>
              </SideGroup>
            </Toolbar>

            <Canvas>
              <CanvasHead>
                <SelectAll>
                  <Tick type="checkbox" />
                  Select all top parts
                </SelectAll>
                <PanPad>
                  {PAN.map((p) => (
                    <PanButton key={p.area} $area={p.area} aria-label={`Move ${p.area}`}>
                      <svg width="20" height="20" viewBox="0 0 20 20"><path d={p.d} /></svg>
                    </PanButton>
                  ))}
                </PanPad>
              </CanvasHead>
              <BoardArea><Board /></BoardArea>
              <Position>
                <div>X：-57.81mm</div>
                <div>Y：-165.83mm</div>
              </Position>
              <Note>
                * The preview for reference only. Check final part placement at DFM Analysis in Order History in 4-6
                hours after placing the order.
              </Note>
            </Canvas>
          </Viewer>

          <Side>
            <TableFrame>
              <PartsTable>
                <colgroup>
                  <Col $width={120} />
                  <Col $width={100} />
                  <Col $width={82} />
                  <col />
                </colgroup>
                <thead>
                  <tr>
                    <HeadCell as="th" scope="col">Top Designator</HeadCell>
                    <HeadCell as="th" scope="col">JLCPCB Part #</HeadCell>
                    <HeadCell as="th" scope="col">Comment</HeadCell>
                    <HeadCell as="th" scope="col">Footprint</HeadCell>
                  </tr>
                </thead>
                <tbody>
                  {PARTS.map((row) => (
                    <tr key={row[0]}>
                      {row.map((value, i) => <Cell key={i}>{value}</Cell>)}
                    </tr>
                  ))}
                </tbody>
              </PartsTable>
            </TableFrame>
            <NextButton>NEXT</NextButton>
          </Side>
        </Dialog>
      </Page>
    </>
  );
}
